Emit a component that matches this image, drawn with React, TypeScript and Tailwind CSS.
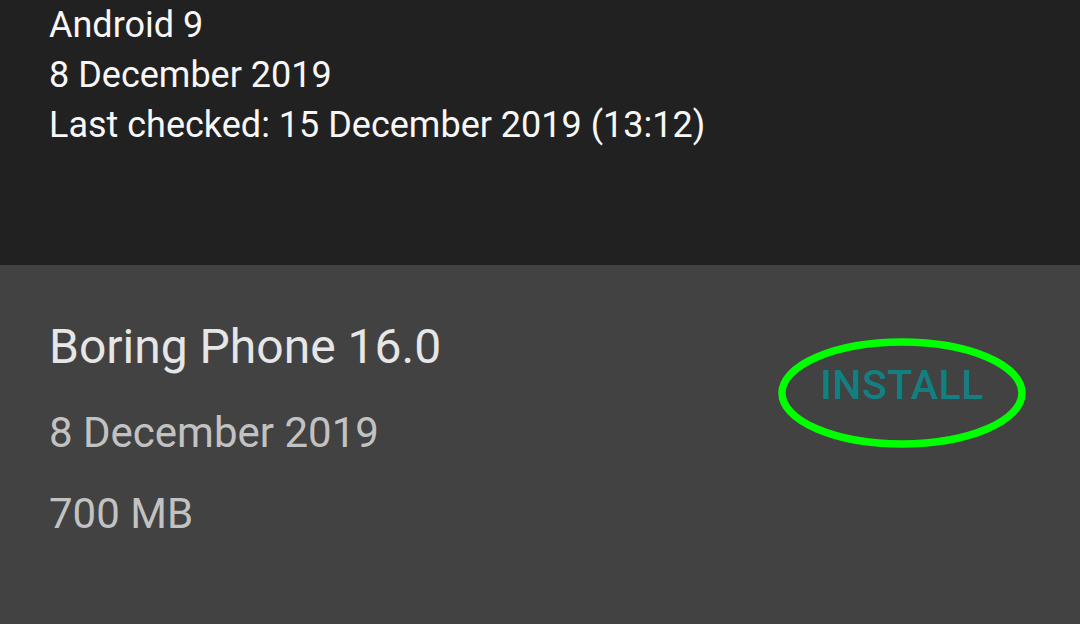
export default function App() {
  return (
    <div className="w-[1080px] h-[624px] flex flex-col overflow-hidden" style={{ fontFamily: "Roboto, 'Liberation Sans', sans-serif" }}>
      <div className="h-[265px] shrink-0 bg-[#212121] pl-[49px] text-[#f7f7f7] text-[36px] leading-[50px]">
        <div>Android 9</div>
        <div>8 December 2019</div>
        <div>Last checked: 15 December 2019 (13:12)</div>
      </div>
      <div className="flex-1 bg-[#424242] flex items-start pl-[49px] pr-[53px]">
        <div className="flex flex-col pt-[54px]">
          <div className="text-[#e6e6e6] text-[48px] leading-[56px]">Boring Phone 16.0</div>
          <div className="text-[#c2c2c2] text-[42px] leading-[48px] mt-[34px]">8 December 2019</div>
          <div className="text-[#c2c2c2] text-[42px] leading-[48px] mt-[33px]">700 MB</div>
        </div>
        <div className="ml-auto mt-[72px] relative w-[250px] h-[112px] flex items-center justify-center pb-[15px]">
          <span className="text-[#137f80] text-[41px] font-medium tracking-[0.5px]">INSTALL</span>
          <svg className="absolute inset-0" width="250" height="112" viewBox="0 0 250 112">
            <ellipse cx="125" cy="56" rx="120" ry="51" fill="none" stroke="#00ff00" strokeWidth="7.5" />
          </svg>
        </div>
      </div>
    </div>
  );
}
